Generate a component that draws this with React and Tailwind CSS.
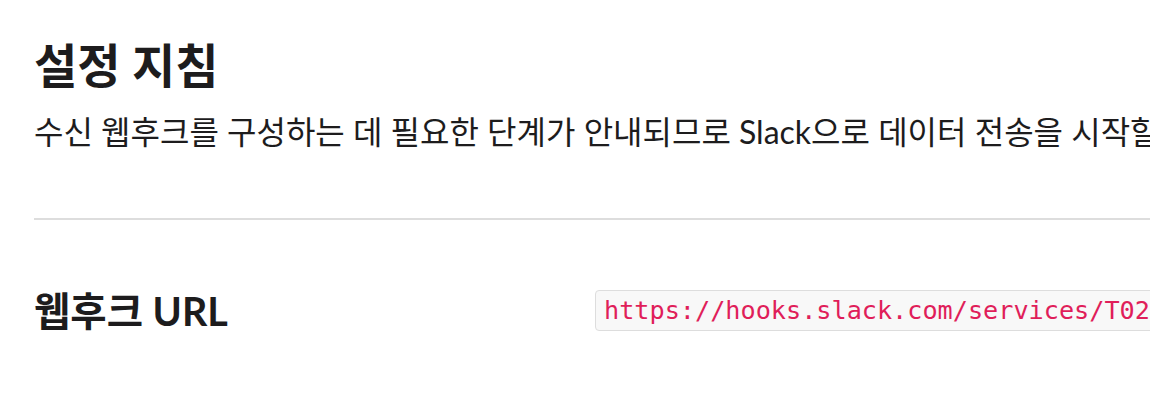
import React from 'react';

export default function App() {
  return (
    <div
      className="w-[1150px] h-[404px] overflow-hidden bg-white text-[#1d1c1d]"
      style={{ fontFamily: 'Lato, "Noto Sans CJK KR", sans-serif' }}
    >
      <div className="pl-[34px] w-[1800px]">
        {/* HEADER */}
        <h1 className="pt-[30px] text-[47px] leading-[70px] font-bold whitespace-nowrap">설정 지침</h1>
        <p className="mt-[10px] text-[32px] leading-[44px] whitespace-nowrap">
          수신 웹후크를 구성하는 데 필요한 단계가 안내되므로 Slack으로 데이터 전송을 시작할 수 있습니다.
        </p>

        <hr className="mt-[64px] border-t-2 border-[#dddddd]" />

        {/* WEBHOOK ROW */}
        <div className="mt-[70px] flex items-center">
          <div className="w-[561px] shrink-0 text-[39.5px] leading-[41px] font-bold whitespace-nowrap">웹후크 URL</div>
          <code
            className="shrink-0 px-[8px] py-[3px] rounded-[4px] border border-[#dddddd] bg-[#f8f8f8] text-[#e01e5a] text-[25.2px] leading-[33px] whitespace-nowrap"
            style={{ fontFamily: '"DejaVu Sans Mono", monospace' }}
          >
            https://hooks.slack.com/services/T02XXXXXX/B0XXXXXXX/XXXXXXXXXXXXXXXXXXXXXXXX
          </code>
        </div>
      </div>
    </div>
  );
}
